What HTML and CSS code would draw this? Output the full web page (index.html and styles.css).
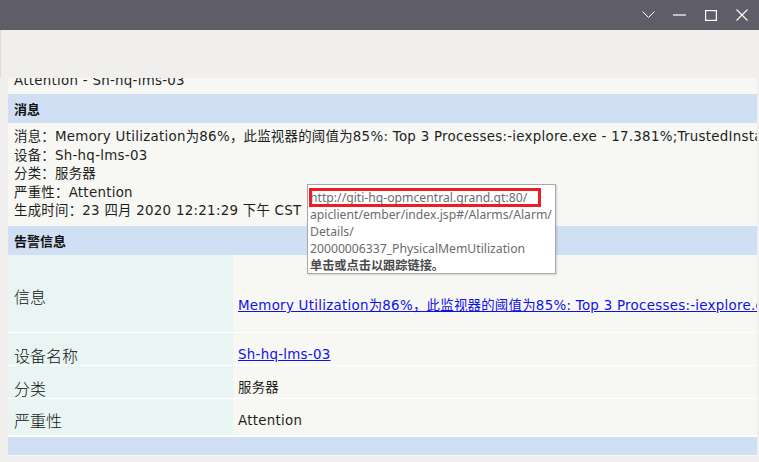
FILE: index.html
```html
<!DOCTYPE html>
<html lang="zh">
<head>
<meta charset="utf-8">
<title>Alarm</title>
<link rel="stylesheet" href="styles.css">
</head>
<body>
<div class="window">
  <div class="titlebar">
    <span class="tb-btn"><svg width="13" height="8" viewBox="0 0 13 8"><polyline points="0.5,0.5 6.5,6.5 12.5,0.5" fill="none" stroke="#fff" stroke-width="1"/></svg></span>
    <span class="tb-btn"><svg width="13" height="2" viewBox="0 0 13 2"><line x1="0" y1="1" x2="13" y2="1" stroke="#fff" stroke-width="1.2"/></svg></span>
    <span class="tb-btn"><svg width="12" height="11" viewBox="0 0 12 11"><rect x="0.6" y="0.6" width="10.8" height="9.8" fill="none" stroke="#fff" stroke-width="1.2"/></svg></span>
    <span class="tb-btn"><svg width="12" height="12" viewBox="0 0 12 12"><path d="M0.5 0.5 L11.5 11.5 M11.5 0.5 L0.5 11.5" stroke="#fff" stroke-width="1.1" fill="none"/></svg></span>
  </div>
  <div class="toolbar"></div>
  <div class="viewport">
    <div class="doc">
      <div class="subject"><span class="subject-text">Attention - Sh-hq-lms-03</span></div>
      <div class="section-head">消息</div>
      <div class="msg">
        <div class="msg-line">消息：Memory Utilization为86%，此监视器的阈值为85%: Top 3 Processes:-iexplore.exe - 17.381%;TrustedInstaller.exe - 10.2%</div>
        <div class="msg-line">设备：Sh-hq-lms-03</div>
        <div class="msg-line">分类：服务器</div>
        <div class="msg-line">严重性：Attention</div>
        <div class="msg-line">生成时间：23 四月 2020 12:21:29 下午 CST</div>
      </div>
      <div class="section-head">告警信息</div>
      <div class="info">
        <div class="row row-info">
          <div class="label">信息</div>
          <div class="value"><a class="link" href="#">Memory Utilization为86%，此监视器的阈值为85%: Top 3 Processes:-iexplore.exe - 17.381%</a></div>
        </div>
        <div class="row row-device">
          <div class="label">设备名称</div>
          <div class="value"><a class="link" href="#">Sh-hq-lms-03</a></div>
        </div>
        <div class="row row-cat">
          <div class="label">分类</div>
          <div class="value">服务器</div>
        </div>
        <div class="row row-sev">
          <div class="label">严重性</div>
          <div class="value">Attention</div>
        </div>
      </div>
      <div class="foot-band"></div>
    </div>
  </div>
  <div class="tooltip">
    <div class="tip-line tip-url">http://giti-hq-opmcentral.grand.gt:80/</div>
    <div class="tip-line">apiclient/ember/index.jsp#/Alarms/Alarm/</div>
    <div class="tip-line">Details/</div>
    <div class="tip-line">20000006337_PhysicalMemUtilization</div>
    <div class="tip-line tip-hint">单击或点击以跟踪链接。</div>
    <div class="tip-mark"></div>
  </div>
</div>
</body>
</html>
```

FILE: styles.css
```css
* { box-sizing: border-box; }
html, body { margin: 0; padding: 0; }
body {
  width: 759px;
  height: 462px;
  overflow: hidden;
  background: #f0efed;
  font-family: "DejaVu Sans", Verdana, "Noto Sans CJK SC", sans-serif;
  font-size: 13.4px;
  letter-spacing: 0.27px;
  color: #1e1e1e;
}
.window {
  position: relative;
  width: 759px;
  height: 462px;
  display: flex;
  flex-direction: column;
}
.titlebar {
  height: 30px;
  flex: none;
  background: #5f5d67;
  display: flex;
  justify-content: flex-end;
  align-items: center;
  padding-right: 2px;
}
.tb-btn {
  width: 31px;
  height: 30px;
  display: flex;
  align-items: center;
  justify-content: center;
}
.toolbar {
  height: 48px;
  flex: none;
  background: #f0efed;
  border-left: 1px solid #dcdbd9;
}
.viewport {
  height: 378px;
  flex: none;
  margin-left: 8px;
  width: 749px;
  overflow: hidden;
  background: #f7f8f3;
}
.doc {
  width: 749px;
}
.subject {
  height: 16px;
  overflow: hidden;
  padding-left: 6px;
}
.subject-text {
  display: block;
  line-height: 16px;
  margin-top: -5px;
  white-space: nowrap;
}
.section-head {
  height: 29px;
  line-height: 29px;
  background: #d0dff4;
  font-weight: bold;
  padding-left: 6px;
  font-family: "Noto Sans CJK SC", sans-serif;
  font-size: 13px;
  letter-spacing: 0;
  color: #111;
}
.msg {
  padding: 5px 0 5px 6px;
  height: 103px;
}
.msg-line {
  line-height: 18.5px;
  white-space: nowrap;
  overflow: hidden;
}
.info {
  display: flex;
  flex-direction: column;
}
.row {
  display: grid;
  grid-template-columns: 225px 1fr;
  border-bottom: 1px solid #ffffff;
}
.label {
  background: #e8f5f3;
  padding-left: 6px;
  font-family: "Noto Sans CJK SC", sans-serif;
  font-weight: 300;
  font-size: 16px;
  letter-spacing: 0;
  line-height: 20px;
  color: #111;
}
.value {
  padding-left: 5px;
  line-height: 20px;
  white-space: nowrap;
  overflow: hidden;
}
.link {
  color: #1010e8;
  text-decoration: underline;
}
.row-info { height: 78px; }
.row-info .label { padding-top: 31px; }
.row-info .value { padding-top: 41px; }
.row-device { height: 33px; }
.row-device .label, .row-device .value { padding-top: 12px; }
.row-cat { height: 33px; }
.row-cat .label, .row-cat .value { padding-top: 12px; }
.row-sev { height: 38px; border-bottom-width: 2px; }
.row-sev .label { padding-top: 11px; }
.row-sev .value { padding-top: 12px; }
.foot-band {
  height: 18px;
  background: #d0dff4;
}
.tooltip {
  position: absolute;
  left: 307px;
  top: 184px;
  width: 249px;
  height: 90px;
  background: #ffffff;
  border: 1px solid #a8a8a8;
  box-shadow: 1px 1px 2px rgba(0,0,0,0.15);
  padding: 4px 0 0 2px;
  font-family: "Noto Sans", "Noto Sans CJK SC", sans-serif;
  font-size: 12.2px;
  letter-spacing: 0;
  color: #6b6b6b;
}
.tip-line {
  line-height: 17px;
  white-space: nowrap;
}
.tip-hint {
  color: #4a4a4a;
  font-weight: bold;
  font-family: "Noto Sans CJK SC", sans-serif;
}
.tip-mark {
  position: absolute;
  left: 1px;
  top: 3px;
  width: 232px;
  height: 19px;
  border: 3px solid #ee1c25;
}
```
